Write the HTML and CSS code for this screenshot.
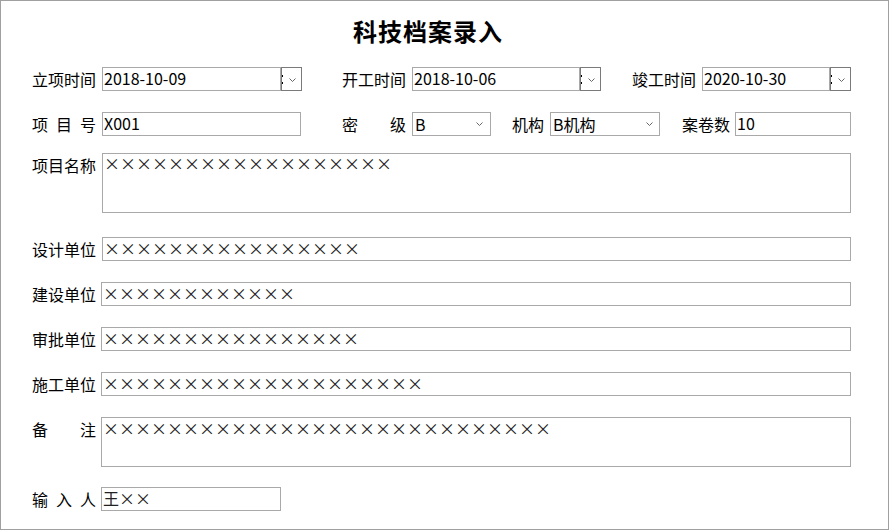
FILE: index.html
```html
<!DOCTYPE html>
<html lang="zh-CN">
<head>
<meta charset="utf-8">
<title>科技档案录入</title>
<link rel="stylesheet" href="styles.css">
</head>
<body>
<div class="frame">
  <h1 class="title">科技档案录入</h1>

  <div class="row r1">
    <span class="lbl">立项时间</span>
    <div class="box d1">2018-10-09</div>
    <div class="dbtn"><svg width="19" height="22" viewBox="0 0 19 22"><rect x="0" y="7" width="1" height="2" fill="#000"/><rect x="0" y="14" width="1" height="2" fill="#000"/><polyline points="7.5,10.5 10.5,13.5 13.5,10.5" fill="none" stroke="#666" stroke-width="1"/></svg></div>
    <span class="lbl l2">开工时间</span>
    <div class="box d2">2018-10-06</div>
    <div class="dbtn"><svg width="19" height="22" viewBox="0 0 19 22"><rect x="0" y="7" width="1" height="2" fill="#000"/><rect x="0" y="14" width="1" height="2" fill="#000"/><polyline points="7.5,10.5 10.5,13.5 13.5,10.5" fill="none" stroke="#666" stroke-width="1"/></svg></div>
    <span class="lbl l3">竣工时间</span>
    <div class="box d3">2020-10-30</div>
    <div class="dbtn"><svg width="19" height="22" viewBox="0 0 19 22"><rect x="0" y="7" width="1" height="2" fill="#000"/><rect x="0" y="14" width="1" height="2" fill="#000"/><polyline points="7.5,10.5 10.5,13.5 13.5,10.5" fill="none" stroke="#666" stroke-width="1"/></svg></div>
  </div>

  <div class="row r2">
    <span class="lbl spread"><span>项</span><span>目</span><span>号</span></span>
    <div class="box xh">X001</div>
    <span class="lbl spread l2b"><span>密</span><span>级</span></span>
    <div class="box sel s1"><span>B</span><svg class="chev" width="7" height="4" viewBox="0 0 7 4"><polyline points="0.5,0.5 3.5,3.5 6.5,0.5" fill="none" stroke="#666" stroke-width="1"/></svg></div>
    <span class="lbl lj">机构</span>
    <div class="box sel s2"><span>B机构</span><svg class="chev" width="7" height="4" viewBox="0 0 7 4"><polyline points="0.5,0.5 3.5,3.5 6.5,0.5" fill="none" stroke="#666" stroke-width="1"/></svg></div>
    <span class="lbl la">案卷数</span>
    <div class="box ajs">10</div>
  </div>

  <div class="row tall r3">
    <span class="lbl">项目名称</span>
    <div class="box area wide6 h60 xx">××××××××××××××××××</div>
  </div>

  <div class="row r4">
    <span class="lbl">设计单位</span>
    <div class="box wide6 xx">××××××××××××××××</div>
  </div>

  <div class="row r5">
    <span class="lbl">建设单位</span>
    <div class="box wide5 xx">××××××××××××</div>
  </div>

  <div class="row r5">
    <span class="lbl">审批单位</span>
    <div class="box wide5 xx">××××××××××××××××</div>
  </div>

  <div class="row r5">
    <span class="lbl">施工单位</span>
    <div class="box wide5 xx">××××××××××××××××××××</div>
  </div>

  <div class="row tall r5">
    <span class="lbl spread"><span>备</span><span>注</span></span>
    <div class="box area wide5 h50 xx">××××××××××××××××××××××××××××</div>
  </div>

  <div class="row r9">
    <span class="lbl spread"><span>输</span><span>入</span><span>人</span></span>
    <div class="box inp xx">王××</div>
  </div>
</div>
</body>
</html>
```
FILE: styles.css
```css
html, body {
  margin: 0;
  padding: 0;
  background: #ffffff;
}

.frame {
  width: 889px;
  height: 530px;
  box-sizing: border-box;
  border: 1px solid #a0a0a0;
  padding: 18px 0 0 31px;
  font-family: "Noto Sans CJK SC", "Noto Sans", sans-serif;
  color: #000;
  display: flex;
  flex-direction: column;
}

.title {
  margin: 0;
  padding-left: 321px;
  font-size: 24px;
  line-height: 24px;
  height: 24px;
  font-weight: 700;
  letter-spacing: 1px;
}

.row {
  display: flex;
  align-items: center;
  height: 24px;
  flex: none;
}

.row.tall {
  align-items: flex-start;
  height: auto;
}

.r1 { margin-top: 24px; }
.r2 { margin-top: 21px; }
.r3 { margin-top: 17px; }
.r4 { margin-top: 24px; }
.r5 { margin-top: 21px; }
.r9 { margin-top: 20px; }

.lbl {
  flex: none;
  width: 64px;
  font-size: 16px;
  line-height: 16px;
  white-space: nowrap;
}

.tall .lbl {
  margin-top: 4px;
}

.spread {
  display: flex;
  justify-content: space-between;
}

.l2 { margin-left: 40px; }
.l3 { margin-left: 31px; }
.l2b { margin-left: 41px; }
.lj { width: 32px; margin-left: 21px; }
.la { width: 48px; margin-left: 22px; }

.box {
  flex: none;
  height: 24px;
  box-sizing: border-box;
  border: 1px solid #a9a9a9;
  padding: 0 1px 1px;
  font-size: 16px;
  line-height: 21px;
  white-space: nowrap;
  overflow: hidden;
  margin-left: 6px;
}

.d1 { width: 179px; }
.d2 { width: 168px; }
.d3 { width: 128px; }

.dbtn {
  flex: none;
  width: 21px;
  height: 24px;
  box-sizing: border-box;
  border: 1px solid #7a7a7a;
  display: flex;
}

.dbtn svg {
  display: block;
}

.xh { width: 199px; }

.sel {
  display: flex;
  align-items: center;
  justify-content: space-between;
  padding: 0 7px 0 2px;
}

.chev {
  display: block;
  flex: none;
}

.s1 { width: 79px; }
.s2 { width: 110px; padding-right: 6px; }

.ajs { width: 116px; margin-left: 5px; }

.wide6 { width: 749px; margin-left: 6px; }
.wide5 { width: 750px; margin-left: 5px; }

.area {
  white-space: normal;
  line-height: 18px;
  overflow: visible;
  padding-bottom: 0;
}

.h60 { height: 60px; }
.h50 { height: 50px; padding-top: 1px; }

.inp { width: 180px; margin-left: 5px; }

.xx {
  font-feature-settings: "fwid" 1;
  color: #222;
}
```
